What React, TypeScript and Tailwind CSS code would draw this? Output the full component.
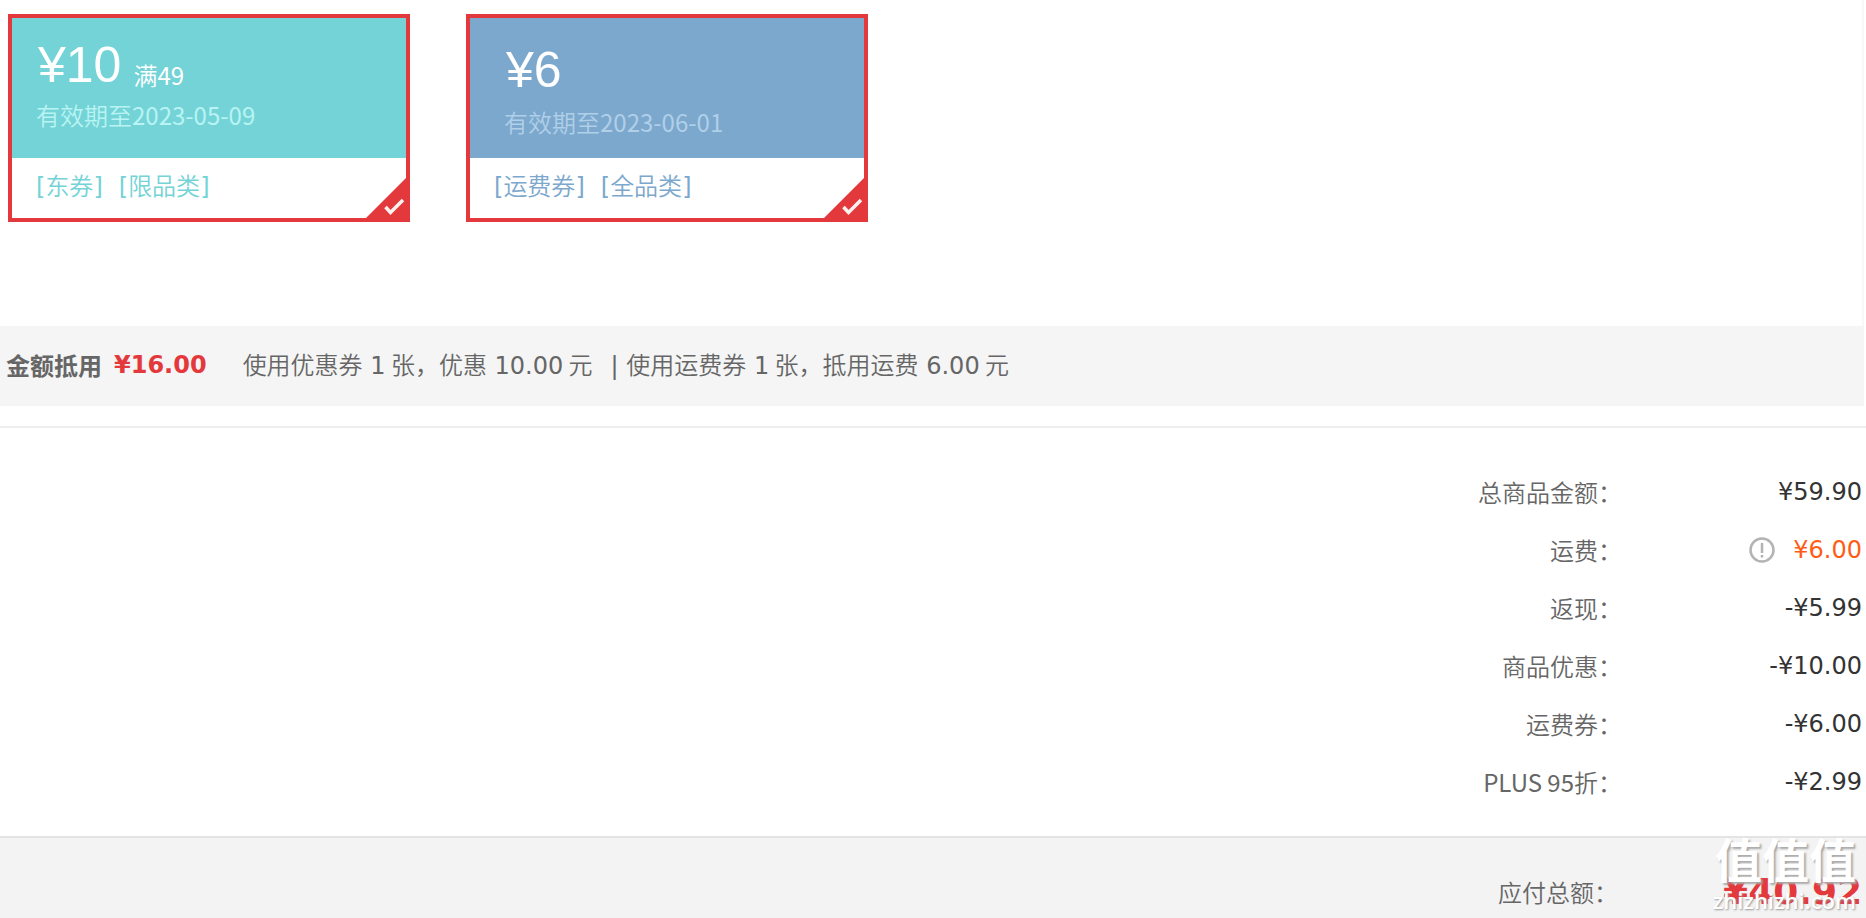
import React from 'react';
import clsx from 'clsx';

type Coupon = {
  id: string;
  amount: string;
  condition?: [string, string];
  expires: string;
  tags: string[];
  kind: 'east' | 'freight';
};

type Fee = {
  prefix?: string;
  label: string;
  value: string;
  highlight?: boolean;
};

const coupons: Coupon[] = [
  { id: 'c1', amount: '¥10', condition: ['满', '49'], expires: '2023-05-09', tags: ['东券', '限品类'], kind: 'east' },
  { id: 'c2', amount: '¥6', expires: '2023-06-01', tags: ['运费券', '全品类'], kind: 'freight' },
];

const fees: Fee[] = [
  { label: '总商品金额', value: '¥59.90' },
  { label: '运费', value: '¥6.00', highlight: true },
  { label: '返现', value: '-¥5.99' },
  { label: '商品优惠', value: '-¥10.00' },
  { label: '运费券', value: '-¥6.00' },
  { prefix: 'PLUS 95', label: '折', value: '-¥2.99' },
];

const Num = ({ children }: { children: React.ReactNode }) => (
  <span className="font-['DejaVu_Sans',sans-serif] font-normal">{children}</span>
);

const CheckCorner = () => (
  <svg className="absolute -right-1 -bottom-1 h-12 w-12" viewBox="0 0 48 48" aria-hidden="true">
    <path d="M48 0V48H0Z" fill="#e4393c" />
    <path d="M23.5 33L28.500 38.500L41 26" fill="none" stroke="#fff1ee" strokeWidth="3.500" />
  </svg>
);

const CouponCard = ({ coupon }: { coupon: Coupon }) => {
  const east = coupon.kind === 'east';
  return (
    <button
      type="button"
      aria-pressed="true"
      className="relative flex w-[402px] flex-col border-4 border-[#e4393c] bg-white text-left text-2xl"
    >
      <div
        className={clsx(
          'flex h-[140px] w-full flex-col text-white',
          east ? 'bg-[#73d3d6] px-[26px] pt-[17px]' : 'bg-[#7ca8cd] px-9 pt-[22px]'
        )}
      >
        <div className="flex h-[60px] items-end gap-3">
          <span className="font-['Liberation_Sans',sans-serif] text-[50px] leading-[60px]">{coupon.amount}</span>
          {coupon.condition && (
            <span className="font-[350] leading-10">
              {coupon.condition[0]}
              <span className="font-normal">{coupon.condition[1]}</span>
            </span>
          )}
        </div>
        <span
          className={clsx(
            '-ml-0.5 font-[350] leading-8',
            east ? 'mt-1 text-[#b9f3f3]' : 'mt-1.5 text-[#b0cfe8]'
          )}
        >
          有效期至<span className="font-normal">{coupon.expires}</span>
        </span>
      </div>
      <div
        className={clsx(
          'flex h-[60px] w-full items-center gap-4 px-6 pb-1 font-[350]',
          east ? 'text-[#73d3d6]' : 'text-[#7ca8cd]'
        )}
      >
        {coupon.tags.map((tag) => (
          <span key={tag}>
            <Num>[</Num>
            {tag}
            <Num>]</Num>
          </span>
        ))}
      </div>
      <CheckCorner />
    </button>
  );
};

const InfoIcon = () => (
  <svg className="h-[26px] w-[26px]" viewBox="0 0 26 26" aria-hidden="true">
    <circle cx="13" cy="13" r="11.500" fill="#fff" stroke="#b3b3b3" strokeWidth="2.500" />
    <path d="M13 6V16" stroke="#b3b3b3" strokeWidth="2.500" />
    <path d="M13 18V20.500" stroke="#b3b3b3" strokeWidth="2.500" />
  </svg>
);

const Watermark = () => (
  <div className="pointer-events-none absolute right-2.5 top-0 flex flex-col items-end text-white [text-shadow:2px_2px_2px_#aaa]">
    <span className="text-[47px] font-bold leading-[40px]">值值值</span>
    <span className="mt-1.5 font-['Open_Sans',sans-serif] text-[22px] font-semibold leading-8 [text-shadow:1px_1px_2px_#999]">
      zhizhizhi.com
    </span>
  </div>
);

const App = () => {
  return (
    <main className="min-h-screen overflow-hidden bg-white font-['Noto_Sans_CJK_SC',sans-serif] text-2xl text-[#666]">
      <section className="mr-0.5 flex h-[326px] items-start gap-14 border-r-2 border-[#f8f8f8] px-2 pt-[14px]">
        {coupons.map((coupon) => (
          <CouponCard key={coupon.id} coupon={coupon} />
        ))}
      </section>

      <section className="mr-0.5 flex h-20 items-center bg-[#f5f5f5] px-1.5 pb-0.5">
        <strong>金额抵用</strong>
        <strong className="ml-3 font-['DejaVu_Sans',sans-serif] text-[#e4393c]">¥16.00</strong>
        <span className="ml-9 font-[350]">
          使用优惠券<Num> 1</Num> 张，优惠<Num> 10.00</Num> 元
        </span>
        <span className="ml-[18px] font-[350]">
          <Num>| </Num>使用运费券<Num> 1</Num> 张，抵用运费<Num> 6.00</Num> 元
        </span>
      </section>

      <dl className="mt-5 flex flex-col border-t-2 border-[#eee] pt-[35px] pb-[25px] pr-1">
        {fees.map((fee) => (
          <div key={fee.label} className="flex h-[58px] items-center justify-end">
            <dt className="font-[350]">
              {fee.prefix && <span className="font-normal">{fee.prefix}</span>}
              {fee.label}：
            </dt>
            <dd
              className={clsx(
                "flex w-60 items-center justify-end gap-[18px] font-['DejaVu_Sans',sans-serif]",
                fee.highlight ? 'text-[#ff5d15]' : 'text-[#333]'
              )}
            >
              {fee.highlight && (
                <button type="button" aria-label="运费说明">
                  <InfoIcon />
                </button>
              )}
              {fee.value}
            </dd>
          </div>
        ))}
      </dl>

      <section className="relative flex h-[120px] items-start justify-end border-t-2 border-[#e4e4e4] bg-[#f3f3f3] pt-[34px] pr-1">
        <span className="mr-1 font-[350] leading-10">应付总额：</span>
        <strong className="w-60 text-right font-['DejaVu_Sans',sans-serif] text-4xl leading-10 text-[#e4393c]">
          ¥40.92
        </strong>
        <Watermark />
      </section>
    </main>
  );
};

export default App;
